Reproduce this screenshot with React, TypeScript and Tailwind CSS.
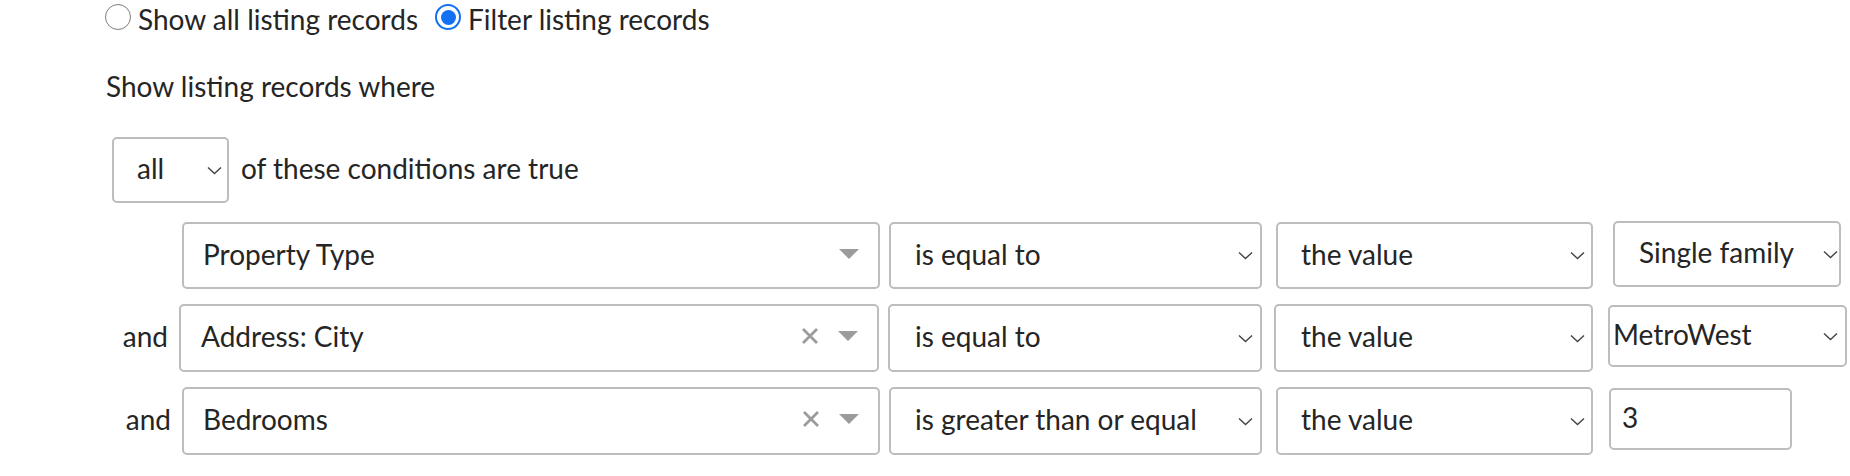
import React from "react";

const Chevron = () => (
  <svg width="15" height="9" viewBox="0 0 15 9" fill="none" className="shrink-0 translate-y-[2px]">
    <path d="M1 1.5L7.5 7.5L14 1.5" stroke="#444" strokeWidth="1.4" />
  </svg>
);

const Tri = () => (
  <svg width="20" height="10" viewBox="0 0 20 10" className="shrink-0">
    <path d="M0 0H20L10 10Z" fill="#9b9b9b" />
  </svg>
);

const XIcon = () => (
  <svg width="18" height="18" viewBox="0 0 18 18" className="shrink-0">
    <path d="M2 2L16 16M16 2L2 16" stroke="#9b9b9b" strokeWidth="2.8" />
  </svg>
);

const box = "box-border border-2 border-[#bdbdbd] rounded-[5px] bg-white flex items-center pb-[4px]";

export default function App() {
  return (
    <div
      className="w-[1850px] h-[476px] bg-white text-[#252525] text-[28px] pl-[106px] overflow-hidden"
      style={{ fontFamily: "Lato, 'Open Sans', sans-serif" }}
    >
      {/* radio row */}
      <div className="flex items-center h-[34px]">
        <span className="-ml-[1px] w-[26px] h-[26px] rounded-full border border-[#7d7d7d] box-border shrink-0" />
        <span className="ml-[7px] leading-none translate-y-[2px]">Show all listing records</span>
        <span className="ml-[17px] w-[26px] h-[26px] rounded-full border-2 border-[#1270f2] box-border flex items-center justify-center shrink-0">
          <span className="w-[15px] h-[15px] rounded-full bg-[#1270f2]" />
        </span>
        <span className="ml-[7px] leading-none translate-y-[2px]">Filter listing records</span>
      </div>

      <div className="mt-[35px] h-[34px] flex items-center">Show listing records where</div>

      <div className="mt-[34px] flex items-center">
        <div className={`${box} ml-[6px] w-[117px] h-[66px] pl-[23px] pr-[5px] justify-between`}>
          <span>all</span>
          <Chevron />
        </div>
        <span className="ml-[12px] -translate-y-[2px]">of these conditions are true</span>
      </div>

      {/* row 1 */}
      <div className="mt-[19px] flex items-start">
        <div className="w-[76px]" />
        <div className={`${box} w-[698px] h-[67px] pl-[19px] pr-[19px]`}>
          <span className="flex-1">Property Type</span>
          <Tri />
        </div>
        <div className={`${box} ml-[9px] w-[373px] h-[67px] pl-[24px] pr-[7px] justify-between`}>
          <span>is equal to</span>
          <Chevron />
        </div>
        <div className={`${box} ml-[14px] w-[317px] h-[67px] pl-[23px] pr-[6px] justify-between`}>
          <span>the value</span>
          <Chevron />
        </div>
        <div className={`${box} ml-[20px] -mt-[1px] w-[228px] h-[66px] pl-[24px] pr-[1px] justify-between`}>
          <span className="whitespace-nowrap">Single family</span>
          <Chevron />
        </div>
      </div>

      {/* row 2 */}
      <div className="mt-[15px] flex items-start">
        <div className="w-[73px] h-[68px] pr-[11px] pb-[4px] flex items-center justify-end">and</div>
        <div className={`${box} w-[700px] h-[68px] pl-[20px] pr-[19px]`}>
          <span className="flex-1">Address: City</span>
          <XIcon />
          <span className="w-[19px]" />
          <Tri />
        </div>
        <div className={`${box} ml-[9px] w-[374px] h-[68px] pl-[25px] pr-[7px] justify-between`}>
          <span>is equal to</span>
          <Chevron />
        </div>
        <div className={`${box} ml-[12px] w-[319px] h-[68px] pl-[25px] pr-[6px] justify-between`}>
          <span>the value</span>
          <Chevron />
        </div>
        <div className={`${box} ml-[15px] mt-[1px] w-[239px] h-[62px] pl-[3px] pr-[7px] justify-between`}>
          <span>MetroWest</span>
          <Chevron />
        </div>
      </div>

      {/* row 3 */}
      <div className="mt-[15px] flex items-start">
        <div className="w-[76px] h-[68px] pr-[11px] pb-[4px] flex items-center justify-end">and</div>
        <div className={`${box} w-[698px] h-[68px] pl-[19px] pr-[19px]`}>
          <span className="flex-1">Bedrooms</span>
          <XIcon />
          <span className="w-[19px]" />
          <Tri />
        </div>
        <div className={`${box} ml-[9px] w-[373px] h-[68px] pl-[24px] pr-[7px] justify-between`}>
          <span className="whitespace-nowrap">is greater than or equal</span>
          <Chevron />
        </div>
        <div className={`${box} ml-[14px] w-[317px] h-[68px] pl-[23px] pr-[6px] justify-between`}>
          <span>the value</span>
          <Chevron />
        </div>
        <div className={`${box} ml-[16px] mt-[1px] w-[183px] h-[62px] pl-[11px]`}>
          <span>3</span>
        </div>
      </div>
    </div>
  );
}
